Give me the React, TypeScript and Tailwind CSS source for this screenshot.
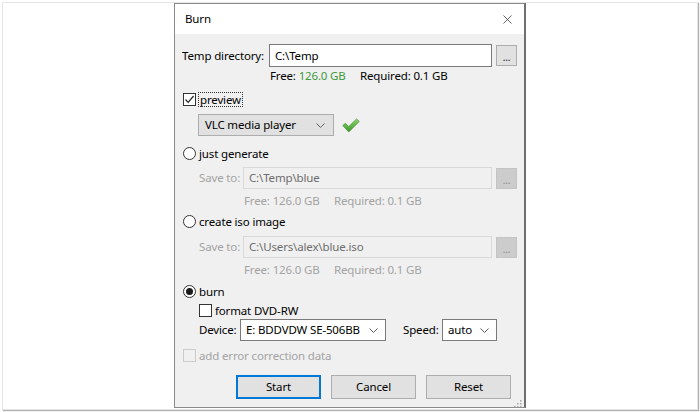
import { X } from 'lucide-react';

const font = { fontFamily: '"Noto Sans", "Open Sans", sans-serif' };

function Chevron({ color = '#606060' }: { color?: string }) {
  return (
    <svg width="9" height="5" viewBox="0 0 9 5" className="shrink-0">
      <path d="M0.5 0.5 L4.5 4.5 L8.5 0.5" fill="none" stroke={color} strokeWidth="1" />
    </svg>
  );
}

function Checkbox({ checked = false, disabled = false }: { checked?: boolean; disabled?: boolean }) {
  return (
    <div
      className={`w-[13px] h-[13px] shrink-0 border flex items-center justify-center ${
        disabled ? 'border-[#cccccc] bg-[#f0f0f0]' : 'border-[#333333] bg-white'
      }`}
    >
      {checked && (
        <svg width="11" height="11" viewBox="0 0 11 11">
          <path d="M1.5 5.5 L4.2 8.3 L9.5 2" fill="none" stroke="#222" strokeWidth="1.2" />
        </svg>
      )}
    </div>
  );
}

function Radio({ checked = false }: { checked?: boolean }) {
  return (
    <div className="w-[13px] h-[13px] shrink-0 rounded-full border border-[#333333] bg-white flex items-center justify-center">
      {checked && <div className="w-[7px] h-[7px] rounded-full bg-[#1a1a1a]" />}
    </div>
  );
}

function BrowseButton({ disabled = false }: { disabled?: boolean }) {
  return (
    <div
      className={`w-[21px] h-[21px] ml-[4px] shrink-0 border flex items-end justify-center pb-[3px] text-[10px] leading-none ${
        disabled ? 'bg-[#cccccc] border-[#c4c4c4] text-[#8a8a8a]' : 'bg-[#e1e1e1] border-[#adadad] text-[#222]'
      }`}
    >
      ...
    </div>
  );
}

function FreeLine({ disabled = false }: { disabled?: boolean }) {
  return (
    <div className={`h-[14px] flex items-center ${disabled ? 'text-[#a3a3a3]' : 'text-black'}`}>
      <span className="w-[90px] shrink-0">
        Free: <span className={disabled ? '' : 'text-[#3d9a3d]'}>126.0 GB</span>
      </span>
      <span>Required: 0.1 GB</span>
    </div>
  );
}

function SaveRow({ path }: { path: string }) {
  return (
    <div className="h-[22px] flex items-center pl-[17px]">
      <span className="w-[44px] shrink-0 text-[#a3a3a3]">Save to:</span>
      <div className="w-[249px] h-[22px] shrink-0 border border-[#d9d9d9] bg-[#f0f0f0] flex items-center px-[5px] text-[#6d6d6d]">
        {path}
      </div>
      <BrowseButton disabled />
    </div>
  );
}

function Button({ label, focused = false }: { label: string; focused?: boolean }) {
  return (
    <div
      className={`w-[85px] h-[24px] shrink-0 flex items-center justify-center bg-[#e1e1e1] ${
        focused ? 'border-2 border-[#0078d7]' : 'border border-[#adadad]'
      }`}
    >
      {label}
    </div>
  );
}

export default function App() {
  return (
    <div className="w-[700px] h-[412px] bg-white p-[2px] text-[11.5px] tracking-[-0.15px] whitespace-nowrap text-black" style={font}>
      <div className="w-[696px] h-[408px] border border-[#e6e6e6] shadow-[1px_1px_1px_#b0b0b0] pl-[171px]">
        <div className="w-[352px] h-[405px] border border-[#8a8a8a] border-r-2 border-r-[#6f6f6f] bg-[#f0f0f0] flex flex-col">
          {/* title bar */}
          <div className="h-[30px] bg-white flex items-center justify-between pl-[10px] pr-[9px] shrink-0">
            <span>Burn</span>
            <X className="w-[15px] h-[15px] text-[#333]" strokeWidth={1.2} />
          </div>

          <div className="flex flex-col pl-[7px]">
            {/* temp dir */}
            <div className="h-[23px] mt-[10px] flex items-center">
              <span className="w-[87px] shrink-0">Temp directory:</span>
              <div className="w-[223px] h-[23px] shrink-0 border border-[#7a7a7a] bg-white flex items-center px-[5px]">C:\Temp</div>
              <BrowseButton />
            </div>
            <div className="mt-[2px] pl-[88px]">
              <FreeLine />
            </div>

            {/* preview */}
            <div className="h-[15px] mt-[9px] flex items-center pl-[1px]">
              <Checkbox checked />
              <span className="ml-[2px] px-[1px] h-[15px] flex items-center border border-dotted border-[#333] leading-none">preview</span>
            </div>
            <div className="h-[22px] mt-[7px] flex items-center pl-[16px]">
              <div className="w-[136px] h-[22px] shrink-0 border border-[#adadad] bg-[#e1e1e1] flex items-center justify-between pl-[6px] pr-[8px]">
                <span>VLC media player</span>
                <Chevron />
              </div>
              <svg width="18" height="15" viewBox="0 0 18 15" className="ml-[8px]">
                <defs>
                  <linearGradient id="gchk" x1="0" y1="0" x2="0" y2="1">
                    <stop offset="0" stopColor="#8fd86b" />
                    <stop offset="1" stopColor="#3b9a2a" />
                  </linearGradient>
                </defs>
                <path d="M0.8 7.6 L3.4 5.3 L6.8 8.6 L14.6 0.9 L17.2 3.4 L6.8 13.9 Z" fill="url(#gchk)" stroke="#3f8a2c" strokeWidth="0.7" />
              </svg>
            </div>

            {/* just generate */}
            <div className="h-[15px] mt-[10px] flex items-center pl-[1px]">
              <Radio />
              <span className="ml-[3px]">just generate</span>
            </div>
            <div className="mt-[6px]">
              <SaveRow path="C:\Temp\blue" />
            </div>
            <div className="mt-[5px] pl-[62px]">
              <FreeLine disabled />
            </div>

            {/* create iso */}
            <div className="h-[15px] mt-[6px] flex items-center pl-[1px]">
              <Radio />
              <span className="ml-[3px]">create iso image</span>
            </div>
            <div className="mt-[7px]">
              <SaveRow path="C:\Users\alex\blue.iso" />
            </div>
            <div className="mt-[5px] pl-[62px]">
              <FreeLine disabled />
            </div>

            {/* burn */}
            <div className="h-[15px] mt-[7px] flex items-center pl-[1px]">
              <Radio checked />
              <span className="ml-[3px]">burn</span>
            </div>
            <div className="h-[15px] mt-[4px] flex items-center pl-[17px]">
              <Checkbox />
              <span className="ml-[3px]">format DVD-RW</span>
            </div>
            <div className="h-[22px] mt-[1px] flex items-center pl-[17px]">
              <span className="w-[41px] shrink-0">Device:</span>
              <div className="w-[146px] h-[22px] shrink-0 border border-[#7a7a7a] bg-white flex items-center justify-between pl-[5px] pr-[7px]">
                <span>E: BDDVDW SE-506BB</span>
                <Chevron />
              </div>
              <span className="ml-[17px] w-[39px] shrink-0">Speed:</span>
              <div className="w-[55px] h-[22px] shrink-0 border border-[#7a7a7a] bg-white flex items-center justify-between pl-[5px] pr-[7px]">
                <span>auto</span>
                <Chevron />
              </div>
            </div>

            {/* error correction */}
            <div className="h-[15px] mt-[7px] flex items-center pl-[1px]">
              <Checkbox disabled />
              <span className="ml-[3px] text-[#a3a3a3]">add error correction data</span>
            </div>

            {/* buttons */}
            <div className="mt-[12px] flex items-center gap-[10px] pl-[54px]">
              <Button label="Start" focused />
              <Button label="Cancel" />
              <Button label="Reset" />
            </div>
          </div>
          <div className="flex justify-end pr-[2px] mt-[1px]">
            <svg width="8" height="8" viewBox="0 0 8 8">
              <g fill="#a8a8a8">
                <rect x="6" y="0" width="1.5" height="1.5" />
                <rect x="3" y="3" width="1.5" height="1.5" />
                <rect x="6" y="3" width="1.5" height="1.5" />
                <rect x="0" y="6" width="1.5" height="1.5" />
                <rect x="3" y="6" width="1.5" height="1.5" />
                <rect x="6" y="6" width="1.5" height="1.5" />
              </g>
            </svg>
          </div>
        </div>
      </div>
    </div>
  );
}
